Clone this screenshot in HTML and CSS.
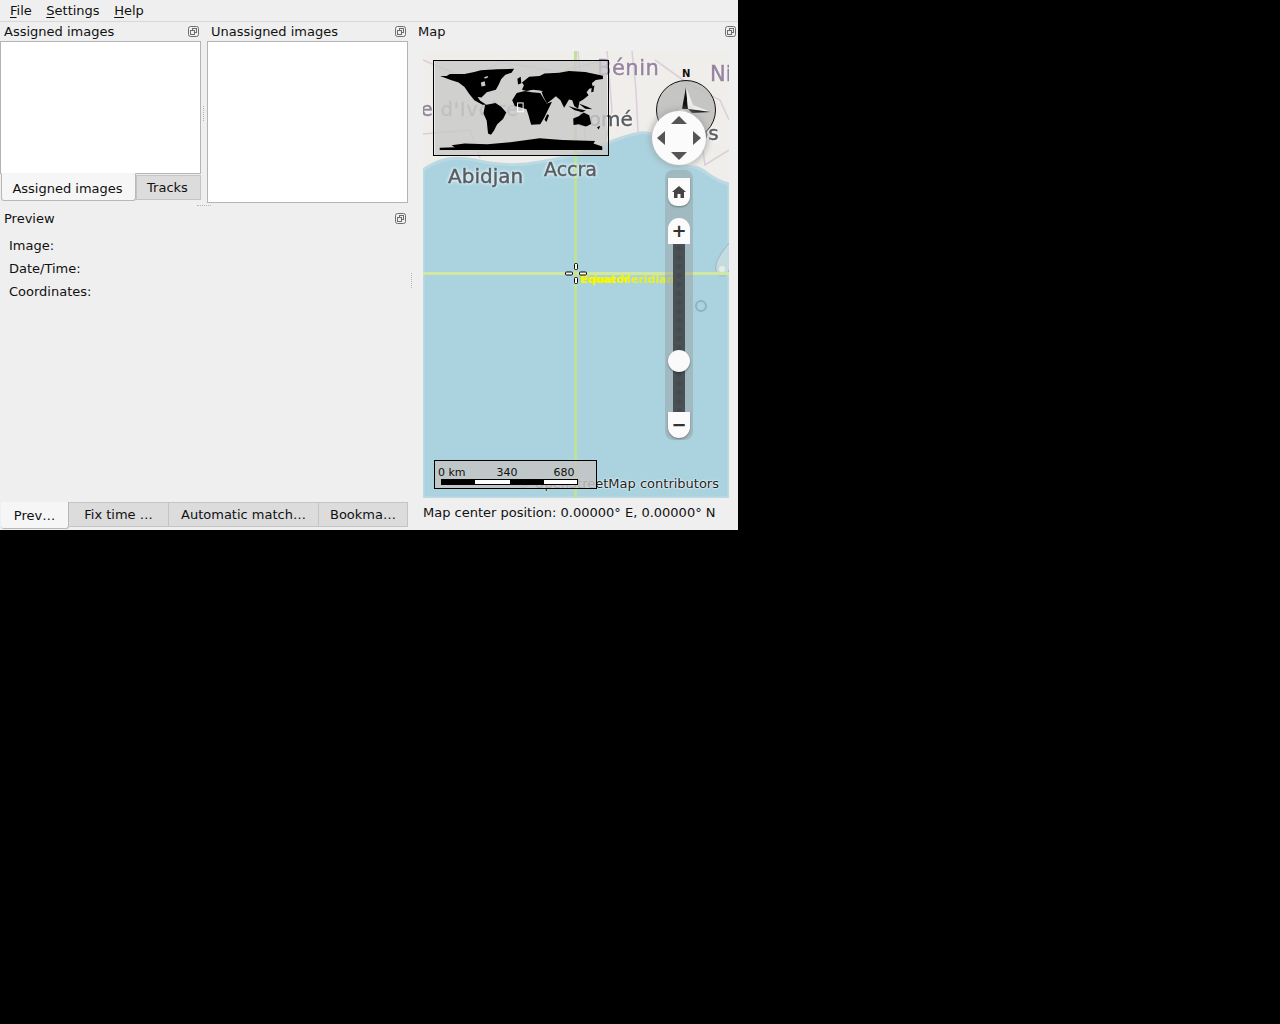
FILE: index.html
```html
<!DOCTYPE html>
<html lang="en">
<head>
    <meta charset="UTF-8">
    <link rel="stylesheet" href="styles.css">
    <title>Geotagging</title>
</head>
<body>
    <svg class="defs" width="0" height="0">
        <symbol id="float" viewBox="0 0 11 11">
            <rect x="0.5" y="0.5" width="10" height="10" rx="2" fill="none" stroke="#6e6e6e"/>
            <rect x="4.5" y="2.5" width="4" height="4" fill="none" stroke="#6e6e6e"/>
            <rect x="2.5" y="4.5" width="4" height="4" fill="#efefef" stroke="#6e6e6e"/>
        </symbol>
    </svg>

    <div class="window">
        <div class="menubar">
            <span><u>F</u>ile</span>
            <span><u>S</u>ettings</span>
            <span><u>H</u>elp</span>
        </div>

        <div class="main">
            <div class="left">
                <div class="top-docks">
                    <div class="dock dock-assigned">
                        <div class="dock-title">Assigned images <svg class="float"><use href="#float"/></svg></div>
                        <div class="list list-short"></div>
                        <div class="tabs-small">
                            <div class="tab-small active">Assigned images</div>
                            <div class="tab-small">Tracks</div>
                        </div>
                    </div>
                    <div class="split-v"><i class="dots dots-v"></i></div>
                    <div class="dock dock-unassigned">
                        <div class="dock-title">Unassigned images <svg class="float"><use href="#float"/></svg></div>
                        <div class="list list-tall"></div>
                    </div>
                </div>
                <div class="split-h"><i class="dots dots-h"></i></div>
                <div class="dock dock-preview">
                    <div class="dock-title">Preview <svg class="float"><use href="#float"/></svg></div>
                    <div class="form">
                        <div>Image:</div>
                        <div>Date/Time:</div>
                        <div>Coordinates:</div>
                    </div>
                    <div class="tabs-bottom">
                        <div class="tab-b tab-prev active">Prev…</div>
                        <div class="tab-b tab-fix">Fix time …</div>
                        <div class="tab-b tab-auto">Automatic match…</div>
                        <div class="tab-b tab-book">Bookma…</div>
                    </div>
                </div>
            </div>

            <div class="split-v split-main"><i class="dots dots-v"></i></div>

            <div class="dock dock-map">
                <div class="dock-title">Map <svg class="float"><use href="#float"/></svg></div>
                <div class="map">
                    <svg class="map-base" width="306" height="447" viewBox="423 51 306 447">
                        <g class="map-soft">
                            <rect x="423" y="51" width="306" height="447" fill="#f0eeea"/>
                            <path d="M423 170 C440 158 455 156 475 160 C500 166 520 166 540 162 C560 158 575 156 590 150 C605 145 620 136 640 133 C655 131 665 140 673 158 C680 170 690 165 698 168 C708 172 712 180 729 184 L729 498 L423 498 Z" fill="#aad3df" stroke="#bcd9e2" stroke-width="3"/>
                            <g fill="none" stroke="#dccfdc" stroke-width="1.6">
                                <path d="M423 60 L470 80 L500 62 L560 72 L605 60"/>
                                <path d="M607 51 L612 110 L606 140"/>
                                <path d="M632 51 L636 90 L638 132"/>
                                <path d="M655 60 L690 85 L720 100 L729 120"/>
                                <path d="M423 134 L470 130 L480 158"/>
                                <path d="M578 51 L582 100 L586 150"/>
                                <path d="M700 130 L705 165 L729 150"/>
                            </g>
                            <path d="M729 243 C722 252 714 262 716 270 C719 279 726 277 729 270" fill="#c4dce0" stroke="#9fb1c8" stroke-width="1"/>
                            <circle cx="722" cy="269" r="3" fill="#e4efe4"/>
                            <circle cx="701" cy="306" r="5" fill="none" stroke="#94aec8" stroke-width="2"/>
                        </g>
                        <path d="M423 273.5 H729" stroke="#d3e89f" stroke-width="3"/>
                        <path d="M575.5 51 V498" stroke="#bfe29a" stroke-width="3"/>
                    </svg>

                    <span class="place place-benin">Bénin</span>
                    <span class="place place-ni">Ni</span>
                    <span class="place place-ivoire">e d'Ivoire</span>
                    <span class="town town-lome">Lomé</span>
                    <span class="town town-lagos">Lagos</span>
                    <span class="town town-abidjan">Abidjan</span>
                    <span class="town town-accra">Accra</span>

                    <span class="grid-label">Equator</span>
                    <span class="grid-label grid-label-wide">Prime Meridian</span>

                    <svg class="crosshair" width="24" height="24" viewBox="0 0 24 24">
                        <g fill="#fff" stroke="#000" stroke-width="1">
                            <rect x="1.5" y="11" width="7" height="3" rx="1"/>
                            <rect x="15.5" y="11" width="7" height="3" rx="1"/>
                            <rect x="10.5" y="2.5" width="3" height="6" rx="1"/>
                            <rect x="10.5" y="16.5" width="3" height="6" rx="1"/>
                        </g>
                    </svg>

                    <svg class="overview" width="176" height="96" viewBox="9 12 528 288">
                        <rect x="9" y="12" width="528" height="288" fill="#c9c9c9" fill-opacity="0.84"/>
                        <g fill="#000">
                            <path d="M25 58 L45 58 L55 52 L100 52 L130 46 L150 40 L200 37 L252 36 L244 48 L225 54 L212 68 L205 84 L196 100 L168 108 L152 124 L140 122 L148 134 L167 146 L155 146 L130 132 L114 112 L100 92 L82 78 L58 70 Z"/>
                            <path d="M163 147 L195 141 L212 152 L228 170 L218 190 L200 206 L190 226 L181 238 L172 234 L168 195 L158 172 Z"/>
                            <path d="M260 110 L285 104 L305 108 L332 110 L342 126 L352 142 L368 137 L354 165 L344 186 L332 206 L304 207 L296 178 L290 160 L270 154 L254 150 L246 132 Z"/>
                            <path d="M276 78 L298 60 L330 58 L345 50 L390 48 L420 43 L470 46 L524 57 L524 67 L502 70 L490 80 L494 94 L482 97 L474 108 L480 117 L464 130 L452 137 L448 158 L436 150 L430 132 L420 130 L413 142 L405 155 L394 132 L380 120 L368 130 L352 142 L340 118 L335 103 L310 100 L290 104 L276 100 L282 86 Z"/>
                            <path d="M433 188 L450 181 L465 170 L482 178 L488 205 L472 213 L450 206 L434 208 Z"/>
                            <path d="M24 278 L70 276 L60 270 L100 265 L170 267 L240 261 L330 249 L400 254 L500 257 L495 265 L522 274 L522 285 L24 285 Z"/>
                            <path d="M353 175 L359 178 L351 199 L345 192 Z"/>
                            <path d="M418 150 L436 162 L460 169 L472 164 L440 157 Z"/>
                            <path d="M490 92 L498 86 L495 106 L488 108 Z"/>
                            <path d="M262 66 L272 60 L274 80 L264 84 Z"/>
                            <path d="M506 215 L516 210 L511 222 Z"/>
                            <path d="M450 142 L476 152 L492 160 L470 158 Z"/>
                        </g>
                        <g fill="#c9c9c9">
                            <path d="M150 78 L162 74 L164 88 L152 90 Z"/>
                            <path d="M160 62 L170 58 L173 62 L162 66 Z"/>
                            <path d="M300 102 L340 104 L338 106 L305 105 Z"/>
                        </g>
                        <rect x="262.5" y="140.5" width="17" height="27" fill="none" stroke="#fff" stroke-width="3"/>
                    </svg>

                    <span class="compass-n">N</span>
                    <svg class="compass" width="62" height="62" viewBox="0 0 62 62">
                        <circle cx="31" cy="31" r="29.5" fill="#bdbdbd" fill-opacity="0.85" stroke="#111" stroke-width="1"/>
                        <path d="M31 8 L27 30 L33 30 Z" fill="#111"/>
                        <path d="M31 8 L38 26 L33 30 Z" fill="#ededed"/>
                        <path d="M56 33 L38 26 L33 30 Z" fill="#ededed"/>
                        <path d="M56 33 L37 34 L33 30 Z" fill="#222"/>
                        <path d="M8 38 L27 30 L33 33 Z" fill="#ededed"/>
                    </svg>

                    <div class="nav-disc">
                        <svg width="54" height="54" viewBox="0 0 54 54">
                            <g fill="#555">
                                <path d="M27 5 L35 13 H19 Z"/>
                                <path d="M27 49 L35 41 H19 Z"/>
                                <path d="M5 27 L13 20 V34 Z"/>
                                <path d="M49 27 L41 20 V34 Z"/>
                            </g>
                        </svg>
                    </div>

                    <div class="zoom-rail">
                        <div class="home-btn">
                            <svg width="14" height="12" viewBox="0 0 14 12"><path d="M7 0 L14 6 H12 V12 H8.5 V8 H5.5 V12 H2 V6 H0 Z" fill="#444"/></svg>
                        </div>
                        <div class="zoom-btn zoom-plus">+</div>
                        <div class="zoom-track"><div class="zoom-handle"></div></div>
                        <div class="zoom-btn zoom-minus">−</div>
                    </div>

                    <span class="attribution">© OpenStreetMap contributors</span>

                    <div class="scale">
                        <div class="scale-labels">
                            <span>0 km</span>
                            <span>340</span>
                            <span>680</span>
                        </div>
                        <div class="scale-bar"><i></i><i></i><i></i><i></i></div>
                    </div>
                </div>
                <div class="status">Map center position: 0.00000° E, 0.00000° N</div>
            </div>
        </div>
    </div>
</body>
</html>
```

FILE: styles.css
```css
body {
    margin: 0;
    background-color: #000;
    color: #111;
    font-family: "DejaVu Sans", sans-serif;
    font-size: 13px;
}

.defs {
    display: block;
}

.window {
    width: 738px;
    height: 530px;
    background-color: #efefef;
    display: flex;
    flex-direction: column;
    overflow: hidden;
}

.menubar {
    height: 21px;
    border-bottom: 1px solid #d8d8d8;
    display: flex;
    align-items: center;
    gap: 14.5px;
    padding-left: 10px;
}

.main {
    flex: 1;
    display: flex;
}

.left {
    width: 408px;
    display: flex;
    flex-direction: column;
}

.top-docks {
    height: 183px;
    display: flex;
}

.dock {
    display: flex;
    flex-direction: column;
}

.dock-title {
    height: 19px;
    line-height: 18px;
    padding-left: 4px;
    display: flex;
    justify-content: space-between;
    align-items: center;
}

.float {
    width: 11px;
    height: 11px;
    margin-right: 2px;
}

.dock-assigned,
.dock-unassigned {
    width: 201px;
}

.list {
    background-color: #fff;
    border: 1px solid #b4b4b4;
    box-sizing: border-box;
}

.list-short {
    height: 133px;
}

.list-tall {
    height: 162px;
}

.tabs-small {
    display: flex;
    align-items: flex-start;
    margin: -1px 0 0 1px;
}

.tab-small {
    box-sizing: border-box;
    width: 65px;
    height: 25px;
    margin-top: 2px;
    padding-right: 2px;
    line-height: 24px;
    text-align: center;
    background-color: #dcdcdc;
    border: 1px solid #c4c4c4;
}

.tab-small.active {
    width: 135px;
    height: 28px;
    margin-top: 0;
    line-height: 29px;
    background-color: #f6f6f6;
    border: 1px solid #b8b8b8;
    border-top-color: #f6f6f6;
    border-radius: 0 0 3px 3px;
}

.split-v {
    width: 6px;
    display: flex;
    align-items: center;
    justify-content: center;
}

.split-h {
    height: 4px;
    display: flex;
    justify-content: center;
    align-items: flex-start;
}

.dots {
    display: block;
}

.dots-v {
    width: 1px;
    height: 15px;
    border-left: 1px dotted #b5b5b5;
}

.dots-h {
    width: 14px;
    height: 1px;
    border-top: 1px dotted #b5b5b5;
}

.split-main {
    padding: 8px 0 0 1px;
    box-sizing: border-box;
}

.dock-preview {
    flex: 1;
}

.form {
    flex: 1;
    padding: 6px 0 0 9px;
    line-height: 23px;
}

.tabs-bottom {
    display: flex;
    align-items: flex-start;
    height: 28px;
}

.tab-b {
    box-sizing: border-box;
    height: 25px;
    line-height: 24px;
    text-align: center;
    background-color: #dcdcdc;
    border: 1px solid #c4c4c4;
    border-left: none;
}

.tab-b.active {
    height: 27px;
    margin-left: 1px;
    line-height: 28px;
    background-color: #f6f6f6;
    border: none;
    border-right: 1px solid #b8b8b8;
    border-bottom: 1px solid #b8b8b8;
    border-radius: 0 0 3px 3px;
}

.tab-prev { width: 68px; }
.tab-fix { width: 100px; }
.tab-auto { width: 150px; }
.tab-book { width: 89px; }

.dock-map {
    flex: 1;
}

.dock-map .dock-title {
    padding-left: 4px;
    margin-bottom: 10px;
}

.dock-map .float {
    margin-right: 2px;
}

.map {
    position: relative;
    width: 306px;
    height: 447px;
    margin-left: 9px;
    overflow: hidden;
}

.map-base {
    display: block;
}

.map-soft {
    filter: blur(0.5px);
}

.status {
    margin-left: 9px;
    margin-top: 7px;
    line-height: 16px;
}

.place,
.town {
    position: absolute;
    white-space: nowrap;
    filter: blur(0.4px);
}

.place {
    color: #9683a0;
    font-size: 21px;
    text-shadow: 0 0 3px #fff;
    -webkit-text-stroke: 0.4px #9683a0;
}

.place-benin { left: 174px; top: 5px; letter-spacing: 0.5px; }
.place-ni { left: 287px; top: 11px; }
.place-ivoire { left: -2px; top: 47px; font-size: 19px; letter-spacing: 1px; color: #8f8798; -webkit-text-stroke: 0.4px #8f8798; }

.town {
    color: #565c61;
    font-size: 20px;
    text-shadow: 0 0 3px #fff, 0 0 4px #fff;
    -webkit-text-stroke: 0.4px #565c61;
}

.town-lome { left: 155px; top: 56px; }
.town-lagos { left: 237px; top: 70px; }
.town-abidjan { left: 25px; top: 113px; }
.town-accra { left: 121px; top: 107px; font-size: 19px; }

.grid-label {
    position: absolute;
    left: 157px;
    top: 222px;
    color: #f7f700;
    font-size: 11px;
    font-weight: bold;
}

.grid-label-wide {
    opacity: 0.85;
}

.crosshair {
    position: absolute;
    left: 141px;
    top: 210px;
}

.overview {
    position: absolute;
    left: 10px;
    top: 9px;
    box-sizing: border-box;
    border: 1px solid #000;
}

.compass-n {
    position: absolute;
    left: 259px;
    top: 16px;
    font-size: 10px;
    font-weight: bold;
    line-height: 13px;
}

.compass {
    position: absolute;
    left: 232px;
    top: 28px;
}

.nav-disc {
    position: absolute;
    left: 229px;
    top: 60px;
    width: 54px;
    height: 54px;
    border-radius: 50%;
    background-color: #fbfbfb;
    box-shadow: 0 0 5px 3px rgba(160, 160, 160, 0.55);
}

.nav-disc svg {
    display: block;
}

.zoom-rail {
    position: absolute;
    left: 242px;
    top: 119px;
    width: 28px;
    height: 270px;
    background-color: rgba(150, 150, 150, 0.42);
    border-radius: 8px;
    display: flex;
    flex-direction: column;
    align-items: center;
}

.home-btn {
    width: 22px;
    height: 28px;
    margin-top: 8px;
    background-color: #fbfbfb;
    border-radius: 0 0 9px 9px;
    display: flex;
    align-items: center;
    justify-content: center;
    box-shadow: 0 1px 2px rgba(0, 0, 0, 0.35);
}

.zoom-btn {
    width: 22px;
    height: 26px;
    background-color: #fbfbfb;
    font-size: 18px;
    font-weight: bold;
    line-height: 25px;
    text-align: center;
    color: #333;
}

.zoom-plus {
    margin-top: 12px;
    border-radius: 11px 11px 0 0;
}

.zoom-minus {
    border-radius: 0 0 11px 11px;
    box-shadow: 0 1px 2px rgba(0, 0, 0, 0.35);
}

.zoom-track {
    position: relative;
    width: 12px;
    height: 168px;
    background-color: #4a5155;
    background-image: radial-gradient(circle at center, #444a4e 2px, transparent 3px);
    background-size: 12px 9px;
}

.zoom-handle {
    position: absolute;
    left: -5px;
    top: 106px;
    width: 22px;
    height: 22px;
    border-radius: 50%;
    background-color: #fafafa;
    box-shadow: 0 1px 2px rgba(0, 0, 0, 0.4);
}

.attribution {
    position: absolute;
    right: 10px;
    top: 425px;
    color: #222;
    line-height: 16px;
    text-shadow: 0 0 2px #fff, 0 0 2px #fff;
}

.scale {
    position: absolute;
    left: 11px;
    top: 409px;
    box-sizing: border-box;
    width: 163px;
    height: 29px;
    padding: 5px 0 0 6px;
    border: 1px solid #000;
    background-color: rgba(196, 196, 196, 0.85);
}

.scale-labels {
    height: 13px;
    margin-left: -3px;
    font-size: 11px;
    line-height: 13px;
    display: flex;
    gap: 31px;
}

.scale-labels span + span + span {
    margin-left: 5px;
}

.scale-bar {
    width: 137px;
    height: 6px;
    outline: 1px solid #000;
    outline-offset: -1px;
    display: flex;
}

.scale-bar i {
    flex: 1;
    background-color: #000;
}

.scale-bar i:nth-child(even) {
    background-color: #fff;
}

u {
    text-underline-offset: 2px;
}
```
